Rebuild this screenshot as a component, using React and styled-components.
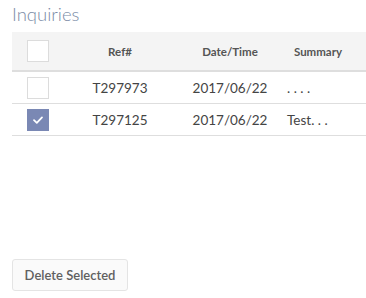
import React from "react";
import styled, { createGlobalStyle } from "styled-components";

const Global = createGlobalStyle`
  body {
    margin: 0;
    background: #fff;
    font-family: Lato, "Open Sans", Arial, sans-serif;
  }
`;

const rows = [
  { id: "T297973", date: "2017/06/22", summary: ". . . .", checked: false },
  { id: "T297125", date: "2017/06/22", summary: "Test. . .", checked: true },
];

export default function App() {
  return (
    <Page>
      <Global />
      <Title>Inquiries</Title>
      <Table>
        <colgroup>
          <col style={{ width: 52 }} />
          <col style={{ width: 112 }} />
          <col style={{ width: 108 }} />
          <col style={{ width: 82 }} />
        </colgroup>
        <thead>
          <tr>
            <Th>
              <Box />
            </Th>
            <Th>Ref#</Th>
            <Th>Date/Time</Th>
            <Th $summary>Summary</Th>
          </tr>
        </thead>
        <tbody>
          {rows.map((r) => (
            <tr key={r.id}>
              <Td>
                <Box $checked={r.checked}>
                  {r.checked && (
                    <svg width="12" height="10" viewBox="0 0 12 10">
                      <path
                        d="M2 5.2 L4.8 7.8 L10 2.4"
                        fill="none"
                        stroke="#fff"
                        strokeWidth="1.8"
                        strokeLinecap="round"
                        strokeLinejoin="round"
                      />
                    </svg>
                  )}
                </Box>
              </Td>
              <Td>{r.id}</Td>
              <Td>{r.date}</Td>
              <Td $summary>{r.summary}</Td>
            </tr>
          ))}
        </tbody>
      </Table>
      <Button>Delete Selected</Button>
    </Page>
  );
}

const Page = styled.div`
  padding: 5px 0 0 12px;
  width: 354px;
`;

const Title = styled.h2`
  margin: 0 0 8px;
  font-size: 18.5px;
  font-weight: 300;
  line-height: 19px;
  color: #7b8ba6;
`;

const Table = styled.table`
  width: 354px;
  border-collapse: collapse;
  table-layout: fixed;
`;

const Th = styled.th`
  height: 38px;
  padding: 0 ${(p) => (p.$summary ? "14px" : "0")} 0 0;
  background: #f4f4f4;
  border-bottom: 2px solid #dedede;
  font-size: 11.5px;
  font-weight: 700;
  color: #555;
  text-align: center;
  vertical-align: middle;
`;

const Td = styled.td`
  height: 31px;
  padding: 0 0 0 ${(p) => (p.$summary ? "3px" : "0")};
  border-bottom: 1px solid #dedede;
  font-size: 13.5px;
  color: #444;
  text-align: ${(p) => (p.$summary ? "left" : "center")};
  vertical-align: middle;
`;

const Box = styled.span`
  display: flex;
  align-items: center;
  justify-content: center;
  width: 22px;
  height: 22px;
  margin-left: 15px;
  box-sizing: border-box;
  border: 1px solid #dcdcdc;
  background: ${(p) => (p.$checked ? "#7a88b4" : "#fff")};
  border-color: ${(p) => (p.$checked ? "#7a88b4" : "#dcdcdc")};
`;

const Button = styled.button`
  margin-top: 123px;
  width: 116px;
  height: 32px;
  padding: 0;
  background: #fafafa;
  border: 1px solid #e4e4e4;
  border-radius: 3px;
  font-family: Lato, "Open Sans", Arial, sans-serif;
  font-size: 13px;
  font-weight: 600;
  color: #606060;
  cursor: pointer;
`;
